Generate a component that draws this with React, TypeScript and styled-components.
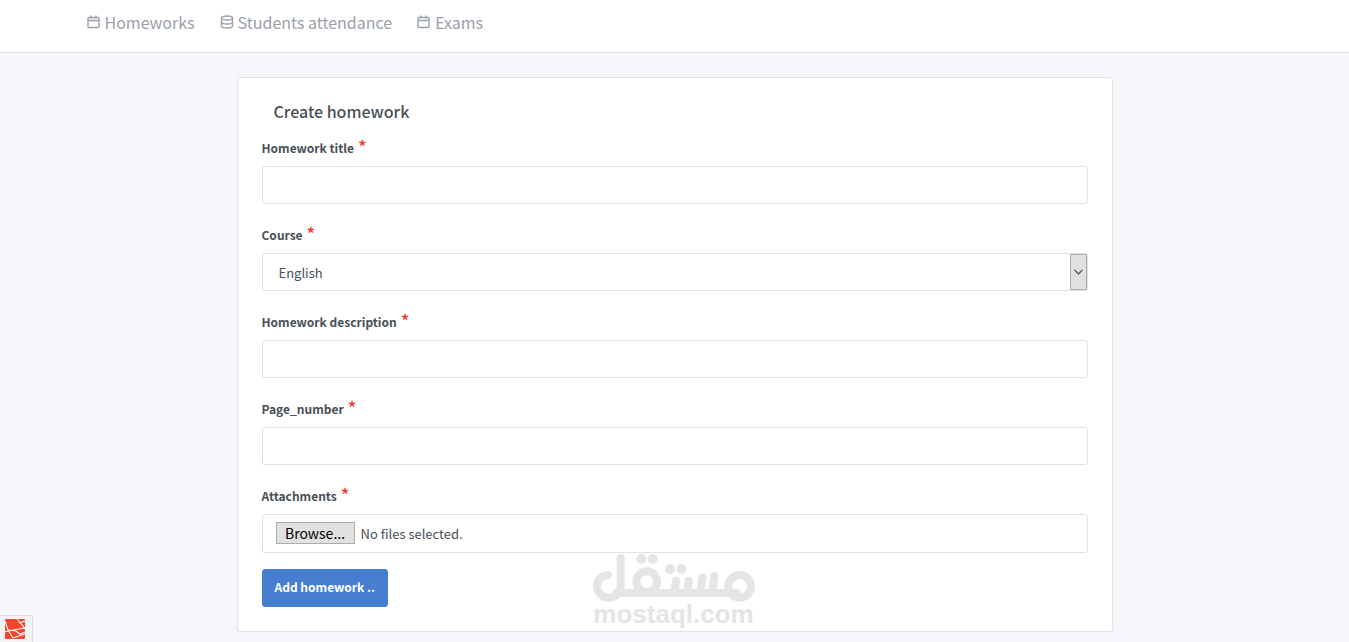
import React, { useRef, useState } from "react";
import styled, { createGlobalStyle } from "styled-components";

const GlobalStyle = createGlobalStyle`
  *, *::before, *::after { box-sizing: border-box; }
  body {
    margin: 0;
    background: #f5f7fb;
    color: #495057;
    font-family: "Source Sans Pro", "Noto Sans CJK SC", "Noto Sans", sans-serif;
    font-size: 13px;
    line-height: 24px;
  }
`;

const Header = styled.header`
  background: #fff;
  border-bottom: 1px solid #dfe4ec;
`;

const Container = styled.div`
  max-width: 1200px;
  margin: 0 auto;
  padding: 0 12px;
`;

const Nav = styled.nav`
  display: flex;
  gap: 25px;
  height: 52px;
  padding-top: 10px;
`;

const NavLink = styled.a`
  display: flex;
  align-items: center;
  gap: 4px;
  height: 24px;
  color: #9aa0ac;
  font-size: 16px;
  text-decoration: none;
`;

const NavIcon = styled.svg`
  width: 14px;
  height: 14px;
  fill: none;
  stroke: currentColor;
  stroke-width: 1.4;
`;

const Main = styled.main`
  display: flex;
  justify-content: center;
  margin-top: 24px;
`;

const Card = styled.form`
  position: relative;
  width: 75%;
  max-width: 876px;
  padding: 24px;
  background: #fff;
  border: 1px solid #dfe3ea;
  border-radius: 3px;
  box-shadow: 0 1px 2px rgba(0, 0, 0, 0.05);
`;

const Title = styled.h1`
  margin: 0 0 13px;
  padding-left: 12px;
  font-size: 16px;
  line-height: 18px;
  font-weight: 500;
`;

const Field = styled.div`
  margin-bottom: 16px;
`;

const Label = styled.label`
  display: flex;
  gap: 4px;
  height: 25px;
  margin-bottom: 8px;
  padding-top: 3px;
  font-size: 12px;
  font-weight: 700;
`;

const Required = styled.span`
  color: #f03a2e;
  font-size: 18px;
  font-weight: 500;
  line-height: 20px;
`;

const TextInput = styled.input`
  display: block;
  width: 100%;
  height: 38px;
  padding: 0 12px;
  border: 1px solid #dee2e9;
  border-radius: 3px;
  background: #fff;
  color: inherit;
  font: inherit;
`;

const SelectBox = styled.div`
  display: flex;
  position: relative;
`;

const Select = styled.select`
  appearance: none;
  width: 100%;
  height: 38px;
  padding: 2px 32px 0 16px;
  border: 1px solid #dee2e9;
  border-radius: 3px;
  background: #fff;
  color: inherit;
  font: inherit;
`;

const SelectArrow = styled.span`
  position: absolute;
  top: 1px;
  right: 1px;
  bottom: 1px;
  display: flex;
  align-items: center;
  justify-content: center;
  width: 17px;
  border: 1px solid #acacac;
  background: #e1e1e1;
  pointer-events: none;
`;

const FileBox = styled.div`
  display: flex;
  align-items: center;
  gap: 6px;
  height: 39px;
  padding: 0 13px 2px;
  border: 1px solid #dee2e9;
  border-radius: 3px;
`;

const FileNames = styled.span`
  padding-top: 2px;
`;

const BrowseButton = styled.button`
  min-width: 79px;
  height: 22px;
  padding: 0 8px;
  border: 1px solid #adadad;
  background: #e1e1e1;
  color: #000;
  font-family: inherit;
  font-size: 14px;
  line-height: 20px;
`;

const Submit = styled.button`
  display: block;
  height: 38px;
  padding: 0 12px 3px;
  border: 1px solid #467fcf;
  border-radius: 3px;
  background: #467fcf;
  color: #fff;
  font-family: inherit;
  font-size: 12px;
  font-weight: 700;
`;

const Watermark = styled.div`
  position: absolute;
  left: 0;
  right: 2px;
  bottom: 6px;
  display: flex;
  flex-direction: column;
  align-items: center;
  color: #e5e5e5;
  pointer-events: none;
`;

const WatermarkText = styled.span`
  font-family: "Liberation Sans", sans-serif;
  font-size: 26px;
  font-weight: 700;
  line-height: 22px;
`;

const DebugBar = styled.a`
  position: fixed;
  left: 0;
  bottom: 0;
  width: 33px;
  height: 27px;
  padding: 2px 5px;
  border: 1px solid #ddd;
  border-width: 1px 1px 0 0;
  background: #f5f5f5;
`;

const CalendarIcon = () => (
  <NavIcon viewBox="0 0 14 14" aria-hidden="true">
    <path d="M2 2.5h9q1 0 1 1v8q0 1-1 1H2q-1 0-1-1v-8q0-1 1-1zM1 5.5h11M4 .5v3M9 .5v3" />
  </NavIcon>
);

const DatabaseIcon = () => (
  <NavIcon viewBox="0 0 14 14" aria-hidden="true">
    <ellipse cx="7" cy="3" rx="5.5" ry="2" />
    <path d="M1.5 3v8c0 1.1 2.5 2 5.5 2s5.5-.9 5.5-2V3M1.5 7c0 1.1 2.5 2 5.5 2s5.5-.9 5.5-2" />
  </NavIcon>
);

const RequiredLabel = ({ htmlFor, children }: { htmlFor: string; children: string }) => (
  <Label htmlFor={htmlFor}>
    {children}
    <Required>*</Required>
  </Label>
);

export default function App() {
  const picker = useRef<HTMLInputElement>(null);
  const [files, setFiles] = useState("No files selected.");

  return (
    <>
      <GlobalStyle />
      <Header>
        <Container>
          <Nav>
            <NavLink href="#homeworks"><CalendarIcon />Homeworks</NavLink>
            <NavLink href="#attendance"><DatabaseIcon />Students attendance</NavLink>
            <NavLink href="#exams"><CalendarIcon />Exams</NavLink>
          </Nav>
        </Container>
      </Header>
      <Container>
        <Main>
          <Card onSubmit={(e) => e.preventDefault()}>
            <Title>Create homework</Title>
            <Field>
              <RequiredLabel htmlFor="title">Homework title</RequiredLabel>
              <TextInput id="title" type="text" />
            </Field>
            <Field>
              <RequiredLabel htmlFor="course">Course</RequiredLabel>
              <SelectBox>
                <Select id="course" defaultValue="English">
                  <option>English</option>
                </Select>
                <SelectArrow>
                  <svg width="9" height="6" viewBox="0 0 9 6" fill="none" stroke="#444" strokeWidth="1.2">
                    <path d="M.5 .8 4.5 4.8 8.5 .8" />
                  </svg>
                </SelectArrow>
              </SelectBox>
            </Field>
            <Field>
              <RequiredLabel htmlFor="description">Homework description</RequiredLabel>
              <TextInput id="description" type="text" />
            </Field>
            <Field>
              <RequiredLabel htmlFor="page">Page_number</RequiredLabel>
              <TextInput id="page" type="text" />
            </Field>
            <Field>
              <RequiredLabel htmlFor="attachments">Attachments</RequiredLabel>
              <FileBox>
                <input
                  id="attachments"
                  type="file"
                  multiple
                  hidden
                  ref={picker}
                  onChange={(e) =>
                    setFiles(Array.from(e.target.files ?? []).map((f) => f.name).join(", ") || "No files selected.")
                  }
                />
                <BrowseButton type="button" onClick={() => picker.current?.click()}>Browse...</BrowseButton>
                <FileNames>{files}</FileNames>
              </FileBox>
            </Field>
            <Submit type="submit">Add homework ..</Submit>
            <Watermark>
              <svg width="164" height="50" viewBox="66 39 492 150" fill="none" stroke="currentColor" strokeWidth="24" strokeLinecap="round" aria-hidden="true">
                <path d="M114 105C95 105 81 120 81 139C81 159 97 173 117 173C138 173 152 159 152 139V54M140 159H500" />
                <circle cx="230" cy="125" r="31" />
                <circle cx="509" cy="139" r="34" />
                <path d="M318 122 313 158M356 122 352 158M397 113 391 158M433 108 426 158" />
                <g fill="currentColor" stroke="none">
                  <circle cx="214" cy="57" r="15" />
                  <circle cx="248" cy="57" r="15" />
                  <circle cx="300" cy="87" r="15" />
                  <circle cx="334" cy="87" r="15" />
                </g>
              </svg>
              <WatermarkText>mostaql.com</WatermarkText>
            </Watermark>
          </Card>
        </Main>
      </Container>
      <DebugBar href="#debugbar" aria-label="Debug bar">
        <svg width="22" height="22" viewBox="0 0 22 22" style={{ display: "block" }} aria-hidden="true">
          <rect width="20" height="20" rx="1" y="1" fill="#f4432f" />
          <path d="M0 3 3 12 8 20M0 14 3 13 20 10M3 12 11 13 15 16 20 14M12 1 18 8 20 11M14 5 20 3M8 20 20 16" fill="none" stroke="#fff" strokeWidth="1.1" />
        </svg>
      </DebugBar>
    </>
  );
}
